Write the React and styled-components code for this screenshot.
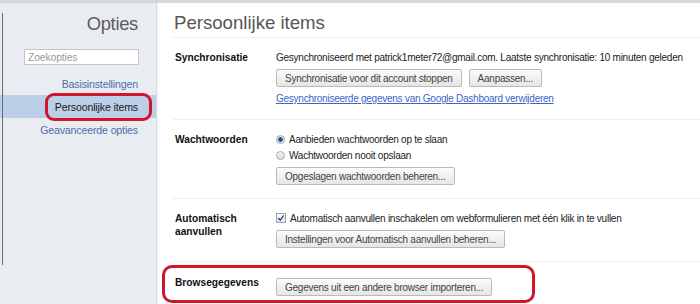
import React from "react";
import styled, { createGlobalStyle } from "styled-components";

const GlobalStyle = createGlobalStyle`
  html, body {
    margin: 0;
    padding: 0;
    background: #ffffff;
    font-family: "Liberation Sans", Arial, sans-serif;
    color: #222;
  }
`;

const navItems = [
  { label: "Basisinstellingen" },
  { label: "Persoonlijke items", active: true, marked: true },
  { label: "Geavanceerde opties" },
];

export default function App() {
  return (
    <>
      <GlobalStyle />
      <Window>
        <TopBar />
        <Layout>
          <Sidebar>
            <SideTitle>Opties</SideTitle>
            <SearchWrap>
              <Search placeholder="Zoekopties" />
            </SearchWrap>
            <Nav>
              {navItems.map((item) => (
                <NavItem key={item.label} active={item.active}>
                  <NavLabel>
                    {item.label}
                    {item.marked && <NavMark />}
                  </NavLabel>
                </NavItem>
              ))}
            </Nav>
          </Sidebar>

          <Main>
            <PageTitle>Persoonlijke items</PageTitle>

            <Section>
              <Label>Synchronisatie</Label>
              <Body>
                <Line>
                  Gesynchroniseerd met patrick1meter72@gmail.com. Laatste
                  synchronisatie: 10 minuten geleden
                </Line>
                <Buttons>
                  <Button>Synchronisatie voor dit account stoppen</Button>
                  <Button>Aanpassen...</Button>
                </Buttons>
                <Link href="#">
                  Gesynchroniseerde gegevens van Google Dashboard verwijderen
                </Link>
              </Body>
            </Section>

            <Section>
              <Label>Wachtwoorden</Label>
              <Body>
                <Line>
                  <Radio checked />
                  Aanbieden wachtwoorden op te slaan
                </Line>
                <Line>
                  <Radio />
                  Wachtwoorden nooit opslaan
                </Line>
                <Buttons>
                  <Button>Opgeslagen wachtwoorden beheren...</Button>
                </Buttons>
              </Body>
            </Section>

            <Section>
              <Label>
                Automatisch
                <br />
                aanvullen
              </Label>
              <Body>
                <Line>
                  <Check>
                    <svg width="8" height="8" viewBox="0 0 9 9">
                      <path
                        d="M1.5 4.5 L3.6 7 L7.6 1.5"
                        fill="none"
                        stroke="#2b4a8a"
                        strokeWidth="1.5"
                      />
                    </svg>
                  </Check>
                  Automatisch aanvullen inschakelen om webformulieren met één
                  klik in te vullen
                </Line>
                <Buttons>
                  <Button>Instellingen voor Automatisch aanvullen beheren...</Button>
                </Buttons>
              </Body>
            </Section>

            <Section last>
              <Label>Browsegegevens</Label>
              <Body>
                <Buttons>
                  <Button>Gegevens uit een andere browser importeren...</Button>
                </Buttons>
              </Body>
              <SectionMark />
            </Section>
          </Main>
        </Layout>
      </Window>
    </>
  );
}

const Window = styled.div`
  width: 700px;
  height: 304px;
  overflow: hidden;
  display: flex;
  flex-direction: column;
`;

const TopBar = styled.div`
  height: 3px;
  background: #d6d8db;
  flex-shrink: 0;
`;

const Layout = styled.div`
  flex: 1;
  display: flex;
`;

const Sidebar = styled.div`
  position: relative;
  width: 156px;
  flex-shrink: 0;
  background: #e9edf2;
  border-right: 1px solid #d5dae0;
  box-shadow: 1px 0 2px rgba(0, 0, 0, 0.06);

  &::before {
    content: "";
    position: absolute;
    left: 2px;
    top: 10px;
    height: 252px;
    width: 1px;
    background: #6b6b6b;
  }
`;

const SideTitle = styled.div`
  text-align: right;
  padding: 10px 18px 0 0;
  font-size: 18.4px;
  letter-spacing: -0.3px;
  line-height: 22px;
  color: #5c5c5c;
`;

const SearchWrap = styled.div`
  display: flex;
  justify-content: flex-end;
  padding: 14px 17px 0 0;
`;

const Search = styled.input`
  width: 115px;
  height: 16px;
  box-sizing: border-box;
  border: 1px solid #c4c8cc;
  background: #fff;
  padding: 0 3px;
  font-family: "Liberation Sans", Arial, sans-serif;
  font-size: 10.4px;
  letter-spacing: -0.15px;
  outline: none;

  &::placeholder {
    color: #9a9a9a;
  }
`;

const Nav = styled.div`
  display: flex;
  flex-direction: column;
  padding-top: 7px;
`;

const NavItem = styled.div`
  height: 23px;
  display: flex;
  align-items: center;
  justify-content: flex-end;
  padding-right: 18px;
  font-size: 10.6px;
  letter-spacing: -0.15px;
  background: ${({ active }) => (active ? "#bccfe8" : "transparent")};
  color: ${({ active }) => (active ? "#1a1a1a" : "#4f6ea8")};
`;

const NavLabel = styled.span`
  position: relative;
  line-height: 12px;
`;

const NavMark = styled.span`
  position: absolute;
  left: -10px;
  right: -14px;
  top: -8px;
  bottom: -8px;
  border: 3px solid #d2152a;
  border-radius: 9px;
`;

const Main = styled.div`
  flex: 1;
  padding-left: 16px;
  min-width: 0;
`;

const PageTitle = styled.div`
  font-size: 18.6px;
  line-height: 22px;
  color: #555;
  padding: 9px 0 3px 1px;
  border-bottom: 1px solid #eeeeee;
`;

const Section = styled.div`
  position: relative;
  display: flex;
  padding: ${({ last }) => (last ? "13px 0 12px 2px" : "12px 0 13px 2px")};
  border-bottom: ${({ last }) => (last ? "none" : "1px solid #eeeeee")};
  font-size: 10px;
  letter-spacing: -0.25px;
`;

const SectionMark = styled.span`
  position: absolute;
  left: -11px;
  top: 3px;
  width: 367px;
  height: 32px;
  border: 3px solid #d2152a;
  border-radius: 10px;
`;

const Label = styled.div`
  width: 101px;
  flex-shrink: 0;
  font-size: 10.2px;
  letter-spacing: 0;
  font-weight: bold;
  line-height: 13px;
  padding-top: 1px;
  color: #111;
`;

const Body = styled.div`
  display: flex;
  flex-direction: column;
  gap: 2px;
  color: #222;
`;

const Line = styled.div`
  display: flex;
  align-items: center;
  gap: 4px;
  height: 14px;
  white-space: nowrap;
`;

const Buttons = styled.div`
  display: flex;
  gap: 7px;
  margin-top: 3px;
`;

const Button = styled.button`
  height: 18px;
  padding: 0 8px;
  font-family: "Liberation Sans", Arial, sans-serif;
  font-size: 10px;
  letter-spacing: -0.25px;
  color: #444;
  border: 1px solid #b9b9b9;
  border-radius: 2px;
  background: linear-gradient(#fbfbfb, #e6e6e6);
  white-space: nowrap;
`;

const Link = styled.a`
  margin-top: 3px;
  line-height: 14px;
  color: #3b66c4;
  text-decoration: underline;
  white-space: nowrap;
`;

const Radio = styled.span`
  width: 9px;
  height: 9px;
  border-radius: 50%;
  box-sizing: border-box;
  border: 1px solid #a9a9a9;
  background: ${({ checked }) =>
    checked
      ? "radial-gradient(circle, #2c4f8c 0 2px, #dfe6ef 2.5px)"
      : "linear-gradient(#f4f4f4, #dcdcdc)"};
`;

const Check = styled.span`
  width: 10px;
  height: 10px;
  box-sizing: border-box;
  border: 1px solid #9aa3ad;
  background: linear-gradient(#fafafa, #e4e8ee);
  display: flex;
  align-items: center;
  justify-content: center;
`;
